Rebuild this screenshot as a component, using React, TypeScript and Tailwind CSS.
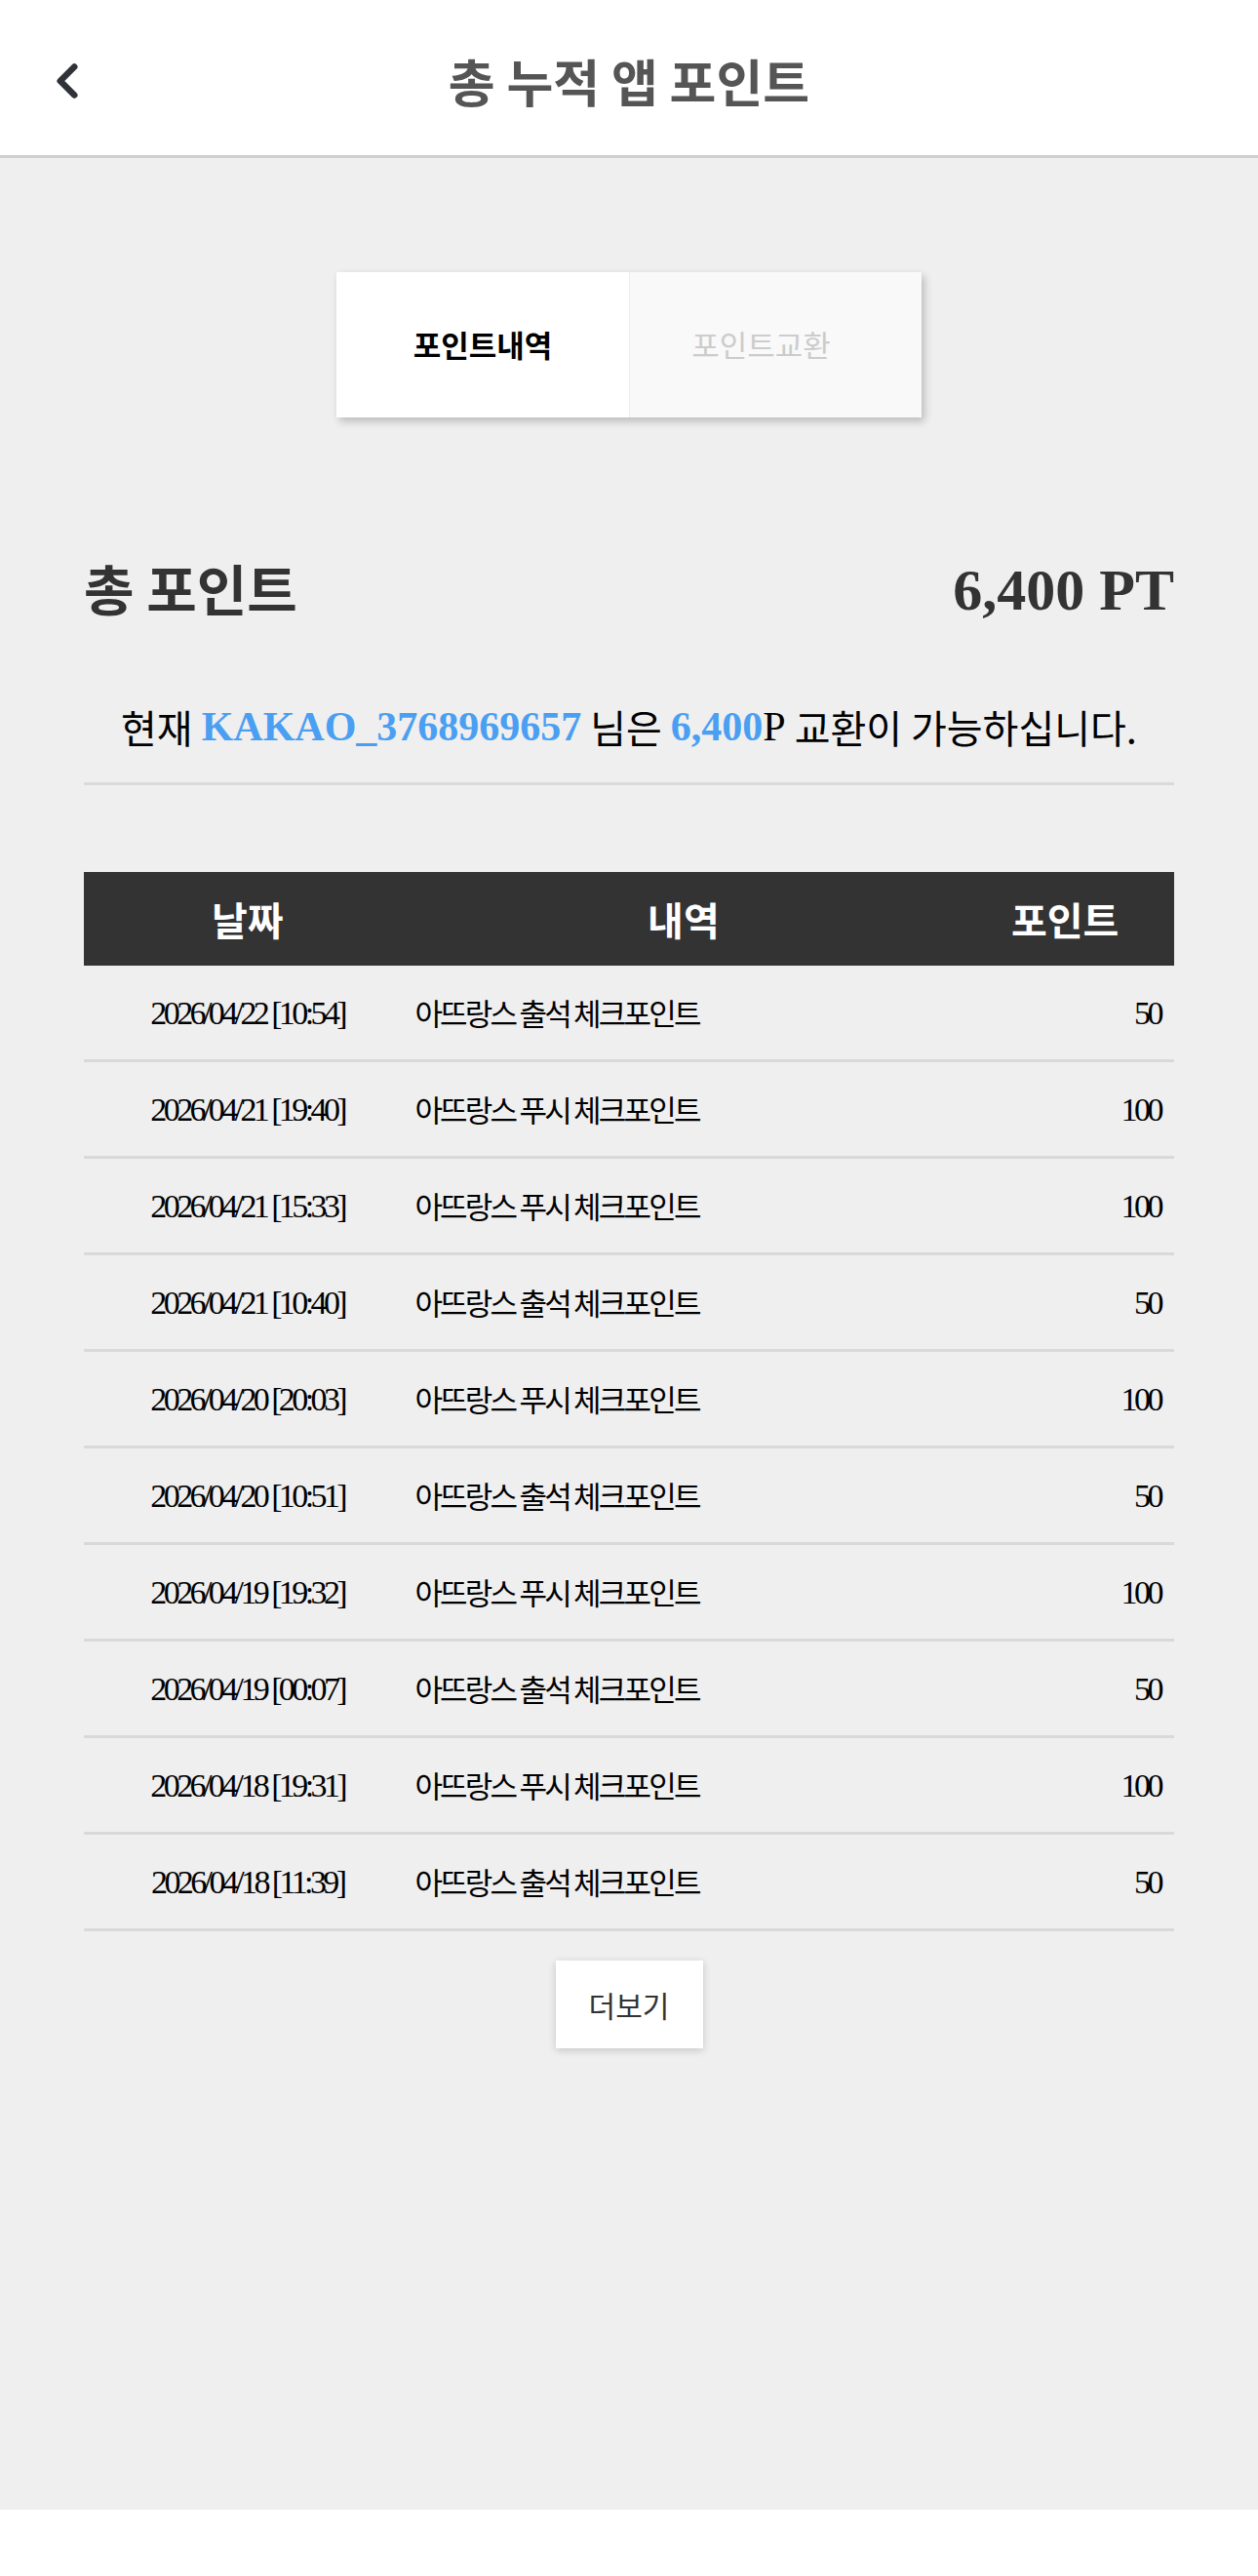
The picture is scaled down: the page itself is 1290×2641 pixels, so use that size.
import { ChevronLeft } from 'lucide-react';

const rows = [
  { date: '2026/04/22 [10:54]', desc: '아뜨랑스 출석 체크포인트', point: 50 },
  { date: '2026/04/21 [19:40]', desc: '아뜨랑스 푸시 체크포인트', point: 100 },
  { date: '2026/04/21 [15:33]', desc: '아뜨랑스 푸시 체크포인트', point: 100 },
  { date: '2026/04/21 [10:40]', desc: '아뜨랑스 출석 체크포인트', point: 50 },
  { date: '2026/04/20 [20:03]', desc: '아뜨랑스 푸시 체크포인트', point: 100 },
  { date: '2026/04/20 [10:51]', desc: '아뜨랑스 출석 체크포인트', point: 50 },
  { date: '2026/04/19 [19:32]', desc: '아뜨랑스 푸시 체크포인트', point: 100 },
  { date: '2026/04/19 [00:07]', desc: '아뜨랑스 출석 체크포인트', point: 50 },
  { date: '2026/04/18 [19:31]', desc: '아뜨랑스 푸시 체크포인트', point: 100 },
  { date: '2026/04/18 [11:39]', desc: '아뜨랑스 출석 체크포인트', point: 50 },
];

const serif = "font-['Liberation_Serif','Times_New_Roman',serif]";

export default function App() {
  return (
    <div className="bg-white font-['Noto_Sans_CJK_KR','Noto_Sans',sans-serif]">
      {/* header */}
      <header className="grid h-[162px] grid-cols-[1fr_auto_1fr] items-center border-b-[3px] border-[#cfcfcf] bg-white">
        <div className="flex items-center pl-[40px] pt-[6px]">
          <ChevronLeft size={58} strokeWidth={2.7} className="text-[#2f3237]" />
        </div>
        <h1 className="pt-[6px] text-[52px] font-semibold leading-none text-[#555555]">총 누적 앱 포인트</h1>
        <div />
      </header>

      <main className="flex h-[2411px] flex-col bg-[#efefef] pt-[117px]">
        {/* tabs */}
        <div className="mx-auto flex h-[149px] w-[600px] shadow-[3px_4px_8px_rgba(0,0,0,0.22)]">
          <div className="flex w-1/2 items-center justify-center bg-white text-[31px] font-bold text-black">포인트내역</div>
          <div className="flex w-1/2 items-center justify-center border-l border-[#ececec] bg-[#f9f9f9] pr-[30px] text-[31px] text-[#cccccc]">포인트교환</div>
        </div>

        <section className="px-[86px]">
          <div className="mt-[144px] flex h-[60px] items-center justify-between">
            <h2 className="text-[56px] font-bold leading-none text-[#333333]">총 포인트</h2>
            <p className={`${serif} pt-[6px] text-[60px] font-bold leading-none text-[#333333]`}>6,400 PT</p>
          </div>

          <p className="mt-[83px] flex h-[60px] items-center justify-center whitespace-pre text-[40px] leading-none text-black">
            <span>현재 </span>
            <span className={`${serif} text-[42px] font-bold text-[#4b9ff2]`}>KAKAO_3768969657</span>
            <span> 님은 </span>
            <span className={`${serif} text-[42px] font-bold text-[#4b9ff2]`}>6,400</span>
            <span className={`${serif} text-[42px]`}>P</span>
            <span> 교환이 가능하십니다.</span>
          </p>

          <div className="mt-[27px] h-[3px] bg-[#dadada]" />

          {/* table */}
          <div className="mt-[89px]">
            <div className="grid h-[96px] grid-cols-[30%_50%_20%] items-center bg-[#333333] text-[40px] font-bold text-white">
              <span className="text-center">날짜</span>
              <span className="text-center">내역</span>
              <span className="text-center">포인트</span>
            </div>
            {rows.map((r, i) => (
              <div key={i} className="grid h-[99px] grid-cols-[30%_50%_20%] items-center border-b-[3px] border-[#d9d9d9] text-black">
                <span className={`${serif} text-center text-[34px] tracking-[-3.6px]`}>{r.date}</span>
                <span className="pl-[4px] text-[31px] tracking-[-2.8px]">{r.desc}</span>
                <span className={`${serif} pr-[14px] text-right text-[34px] tracking-[-3.5px]`}>{r.point}</span>
              </div>
            ))}
          </div>

          <div className="mt-[30px] flex justify-center">
            <button className="h-[90px] w-[151px] bg-white text-[30px] text-[#333333] shadow-[0_2px_8px_rgba(0,0,0,0.18)]">더보기</button>
          </div>
        </section>
      </main>
      <div className="h-[68px] bg-white" />
    </div>
  );
}
